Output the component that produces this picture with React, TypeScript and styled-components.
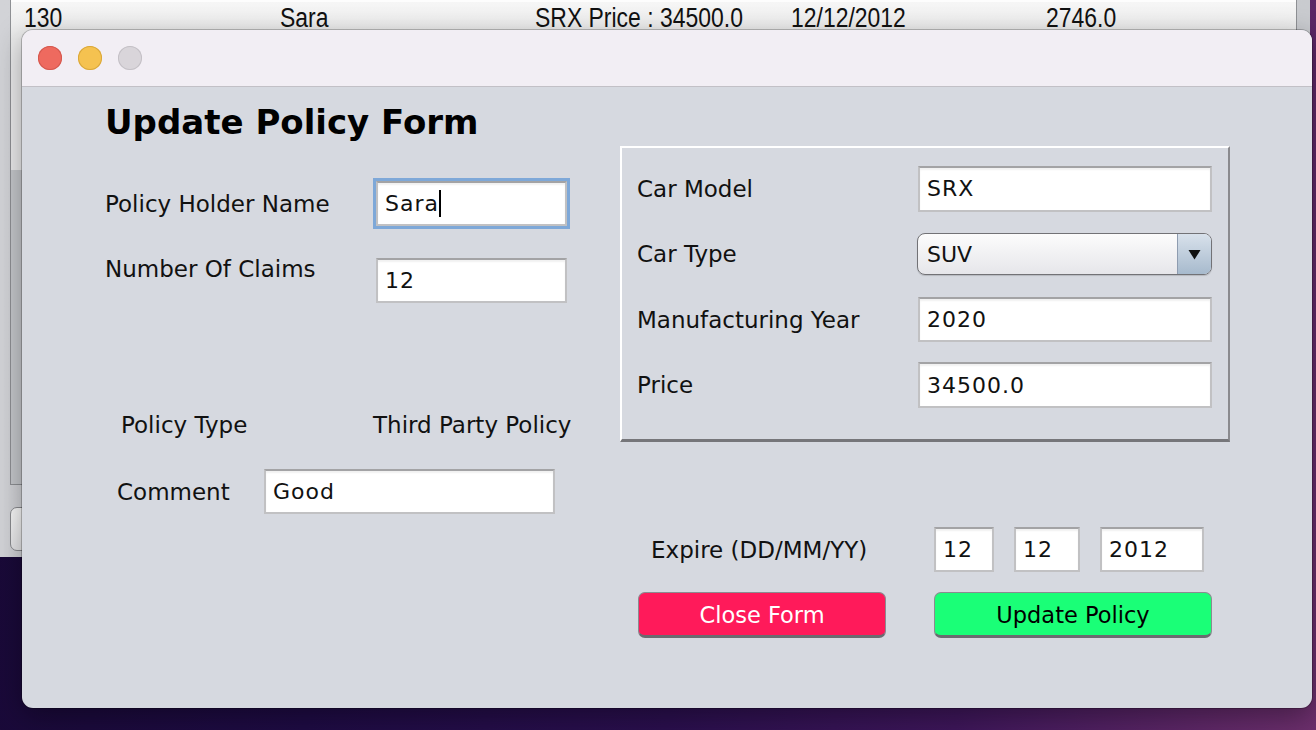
import React from "react";
import styled, { createGlobalStyle } from "styled-components";

const Global = createGlobalStyle`
  html, body { margin: 0; padding: 0; }
  body { width: 1316px; height: 730px; overflow: hidden; }
`;

const Desktop = styled.div`
  position: relative;
  width: 1316px;
  height: 730px;
  overflow: hidden;
  background: linear-gradient(100deg, #180935 0%, #1e0b43 30%, #2a0f4d 55%, #3d1659 75%, #6c2f6c 100%);
`;

/* ---------- background window ---------- */
const BackWindow = styled.div`
  position: absolute;
  left: 0;
  top: 0;
  width: 1310px;
  height: 557px;
  background: linear-gradient(to right, #d2d3d7, #c9cbcf);
  display: flex;
  flex-direction: column;
`;

const ScrollPane = styled.div`
  margin-left: 10px;
  width: 1287px;
  height: 485px;
  box-sizing: border-box;
  border: 1px solid #8e9094;
  border-top: none;
  background: #c6c8cc;
  display: flex;
  flex-direction: column;
`;

const TableRow = styled.div`
  display: grid;
  grid-template-columns: repeat(5, 255.5px);
  height: 40px;
  box-sizing: border-box;
  padding-left: 13px;
  border-top: 2px solid #fdfdfd;
  background: linear-gradient(#f6f6f6, #e9e9e9);
  font-family: "Liberation Sans", Arial, sans-serif;
  font-size: 27px;
  line-height: 27px;
  color: #111;
`;

const Cell = styled.div`
  padding-top: 3px;
  white-space: nowrap;
  transform: scaleX(0.85);
  transform-origin: left center;
`;

const RowsArea = styled.div`
  height: 130px;
  background: #ebebec;
`;

const BackButton = styled.div`
  margin: 22px 0 0 10px;
  width: 120px;
  height: 44px;
  box-sizing: border-box;
  border: 1px solid #8a8b8f;
  border-radius: 7px;
  background: linear-gradient(#fafafa, #e6e6e8);
`;

/* ---------- dialog ---------- */
const Dialog = styled.div`
  position: absolute;
  left: 22px;
  top: 30px;
  width: 1290px;
  height: 678px;
  border-radius: 11px;
  overflow: hidden;
  background: #d6d9e0;
  box-shadow: 0 0 0 1px rgba(0, 0, 0, 0.22), 0 8px 28px rgba(0, 0, 0, 0.35);
  display: flex;
  flex-direction: column;
  font-family: "DejaVu Sans", "Noto Sans", sans-serif;
  color: #111;
`;

const TitleBar = styled.div`
  height: 56px;
  flex: none;
  background: #f2eef4;
  border-bottom: 1px solid #c2c0c6;
  display: flex;
  align-items: center;
  gap: 16px;
  padding-left: 16px;
`;

const Light = styled.span<{ $c: string; $b: string }>`
  width: 24px;
  height: 24px;
  border-radius: 50%;
  background: ${(p) => p.$c};
  box-shadow: inset 0 0 0 1px ${(p) => p.$b};
`;

const Content = styled.div`
  flex: 1;
  display: flex;
  padding-left: 83px;
`;

const LeftCol = styled.div`
  width: 515px;
  display: flex;
  flex-direction: column;
`;

const RightCol = styled.div`
  width: 610px;
  padding-top: 59px;
  display: flex;
  flex-direction: column;
`;

const Title = styled.h1`
  margin: 15px 0 0 0;
  font-family: "DejaVu Sans", sans-serif;
  font-weight: bold;
  font-size: 34px;
  line-height: 40px;
  color: #000;
`;

const FormRow = styled.div<{ $mt: number; $h: number; $top?: boolean }>`
  margin-top: ${(p) => p.$mt}px;
  height: ${(p) => p.$h}px;
  display: flex;
  align-items: ${(p) => (p.$top ? "flex-start" : "center")};
`;

const Label = styled.div<{ $w?: number; $ml?: number; $mt?: number }>`
  width: ${(p) => (p.$w ? `${p.$w}px` : "auto")};
  margin-left: ${(p) => p.$ml ?? 0}px;
  margin-top: ${(p) => p.$mt ?? 0}px;
  flex: none;
  font-size: 23px;
  line-height: 26px;
  white-space: nowrap;
  color: #111;
`;

const Field = styled.div<{ $w: number; $h?: number; $focus?: boolean }>`
  width: ${(p) => p.$w}px;
  height: ${(p) => p.$h ?? 45}px;
  flex: none;
  box-sizing: border-box;
  background: #fff;
  border: 2px solid #c1c1c3;
  border-top-color: #a3a3a5;
  box-shadow: inset 0 2px 2px rgba(0, 0, 0, 0.06)
    ${(p) => (p.$focus ? ", 0 0 0 3px #7ea8d8" : "")};
  padding-left: 7px;
  display: flex;
  align-items: center;
  font-size: 22px;
  letter-spacing: 1px;
  color: #111;
  white-space: nowrap;
`;

const Caret = styled.span`
  display: inline-block;
  width: 2px;
  height: 27px;
  background: #000;
`;

const Panel = styled.div`
  width: 610px;
  height: 296px;
  box-sizing: border-box;
  border-top: 2px solid #ffffff;
  border-left: 2px solid #ffffff;
  border-right: 2px solid #8a8a8e;
  border-bottom: 3px solid #76767a;
  padding: 18px 0 0 15px;
  display: grid;
  grid-template-columns: 281px 294px;
  grid-auto-rows: 45px;
  row-gap: 20.5px;
  align-items: center;
`;

const Combo = styled.div`
  width: 295px;
  height: 42px;
  margin-left: -1px;
  box-sizing: border-box;
  border: 1px solid #727276;
  border-radius: 8px;
  background: linear-gradient(#fcfcfc, #e6e6ea);
  display: flex;
  overflow: hidden;
  box-shadow: 0 1px 1px rgba(0, 0, 0, 0.15);
`;

const ComboText = styled.div`
  flex: 1;
  padding-left: 9px;
  display: flex;
  align-items: center;
  font-size: 22px;
  color: #111;
`;

const ComboArrow = styled.div`
  width: 33px;
  border-left: 1px solid #8e9cb0;
  background: linear-gradient(#d8e1eb, #a7bacd);
  display: flex;
  align-items: center;
  justify-content: center;
`;

const ExpireRow = styled.div`
  margin-top: 85px;
  padding-left: 31px;
  height: 45px;
  display: flex;
  align-items: center;
  gap: 20px;
`;

const ButtonRow = styled.div`
  margin-top: 20px;
  padding-left: 18px;
  display: flex;
  gap: 48px;
`;

const Button = styled.button<{ $bg: string; $fg: string; $w: number }>`
  width: ${(p) => p.$w}px;
  height: 46px;
  box-sizing: border-box;
  border: 1px solid #8b8b90;
  border-bottom: 3px solid #6b6b70;
  border-radius: 7px;
  background: ${(p) => p.$bg};
  color: ${(p) => p.$fg};
  font-family: "DejaVu Sans", sans-serif;
  font-size: 22.5px;
  padding: 0;
  padding-top: 1px;
  cursor: pointer;
`;

export default function App() {
  return (
    <>
      <Global />
      <Desktop>
        <BackWindow>
          <ScrollPane>
            <TableRow>
              <Cell>130</Cell>
              <Cell>Sara</Cell>
              <Cell>SRX Price : 34500.0</Cell>
              <Cell>12/12/2012</Cell>
              <Cell>2746.0</Cell>
            </TableRow>
            <RowsArea />
          </ScrollPane>
          <BackButton />
        </BackWindow>

        <Dialog>
          <TitleBar>
            <Light $c="#ee6a5f" $b="#d4584e" />
            <Light $c="#f5c250" $b="#d9a73a" />
            <Light $c="#d9d5da" $b="#c4c0c6" />
          </TitleBar>
          <Content>
            <LeftCol>
              <Title>Update Policy Form</Title>
              <FormRow $mt={39} $h={45}>
                <Label $w={271}>Policy Holder Name</Label>
                <Field $w={191} $focus>
                  Sara
                  <Caret />
                </Field>
              </FormRow>
              <FormRow $mt={32} $h={45} $top>
                <Label $w={271} $mt={-2}>
                  Number Of Claims
                </Label>
                <Field $w={191}>12</Field>
              </FormRow>
              <FormRow $mt={109} $h={26}>
                <Label $w={252} $ml={16}>
                  Policy Type
                </Label>
                <Label>Third Party Policy</Label>
              </FormRow>
              <FormRow $mt={31} $h={45}>
                <Label $w={147} $ml={12}>
                  Comment
                </Label>
                <Field $w={291}>Good</Field>
              </FormRow>
            </LeftCol>

            <RightCol>
              <Panel>
                <Label>Car Model</Label>
                <Field $w={294} $h={46}>
                  SRX
                </Field>
                <Label>Car Type</Label>
                <Combo>
                  <ComboText>SUV</ComboText>
                  <ComboArrow>
                    <svg width="13" height="11" viewBox="0 0 13 11">
                      <path d="M0.5 1 L12.5 1 L6.5 10.5 Z" fill="#111" />
                    </svg>
                  </ComboArrow>
                </Combo>
                <Label>Manufacturing Year</Label>
                <Field $w={294}>2020</Field>
                <Label>Price</Label>
                <Field $w={294} $h={46}>
                  34500.0
                </Field>
              </Panel>

              <ExpireRow>
                <Label $w={263}>Expire (DD/MM/YY)</Label>
                <Field $w={60}>12</Field>
                <Field $w={66}>12</Field>
                <Field $w={104}>2012</Field>
              </ExpireRow>

              <ButtonRow>
                <Button $bg="#ff1a5a" $fg="#ffffff" $w={248}>
                  Close Form
                </Button>
                <Button $bg="#1aff77" $fg="#000000" $w={278}>
                  Update Policy
                </Button>
              </ButtonRow>
            </RightCol>
          </Content>
        </Dialog>
      </Desktop>
    </>
  );
}
